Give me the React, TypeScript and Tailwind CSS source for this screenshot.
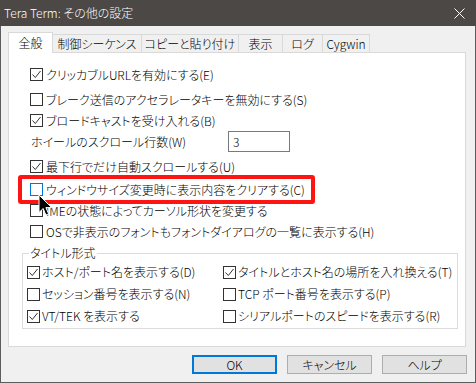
import React from "react";

const Check = ({ checked, hover }: { checked?: boolean; hover?: boolean }) => (
  <span
    className={`flex h-[13px] w-[13px] shrink-0 items-center justify-center border bg-white ${
      hover ? "border-[#0078d7]" : "border-[#333333]"
    }`}
  >
    {checked && (
      <svg width="11" height="11" viewBox="0 0 11 11" fill="none">
        <path d="M1.5 5.5l2.8 3 5.2-6.5" stroke="#333333" strokeWidth="1" />
      </svg>
    )}
  </span>
);

const Row = ({
  label,
  checked,
  hover,
  className = "",
}: {
  label: string;
  checked?: boolean;
  hover?: boolean;
  className?: string;
}) => (
  <div className={`flex h-[21px] items-center gap-[3px] pl-[21px] ${className}`}>
    <Check checked={checked} hover={hover} />
    <span className="whitespace-nowrap">{label}</span>
  </div>
);

const GroupItem = ({ label, checked }: { label: string; checked?: boolean }) => (
  <div className="flex h-[22px] items-center gap-[2px]">
    <Check checked={checked} />
    <span className="whitespace-nowrap">{label}</span>
  </div>
);

const tabs = [
  { name: "全般", w: "w-[45px]" },
  { name: "制御シーケンス", w: "w-[89px]" },
  { name: "コピーと貼り付け", w: "w-[97px]" },
  { name: "表示", w: "w-[44px]" },
  { name: "ログ", w: "w-[40px]" },
  { name: "Cygwin", w: "w-[47px]" },
];

export default function App() {
  return (
    <div className="flex h-[383px] w-[476px] flex-col overflow-hidden bg-[#f0f0f0] font-['Noto_Sans_CJK_JP','Noto_Sans',sans-serif] text-[12px] font-light leading-none text-black [font-feature-settings:'palt']">
      <div className="flex h-[26px] shrink-0 items-center justify-between bg-[#4b4846] pl-[4px] pr-[11px] text-white">
        <span>Tera Term: その他の設定</span>
        <svg width="11" height="11" viewBox="0 0 11 11" fill="none">
          <path d="M0.5 0.5l10 10M10.5 0.5l-10 10" stroke="#ffffff" strokeWidth="1" />
        </svg>
      </div>

      <div className="flex flex-1 flex-col border-x border-b border-[#5c5c5c] pl-[7px] pt-[6px]">
        <div className="flex h-[20px] items-end">
          {tabs.map((t, i) =>
            i === 0 ? (
              <div
                key={t.name}
                className={`relative z-10 -mb-px flex h-[21px] items-center justify-center border border-b-0 border-[#d9d9d9] bg-white ${t.w}`}
              >
                {t.name}
              </div>
            ) : (
              <div
                key={t.name}
                className={`flex h-[18px] items-center justify-center border-r border-t border-[#d9d9d9] bg-[#f0f0f0] ${t.w}`}
              >
                {t.name}
              </div>
            )
          )}
        </div>

        <div className="relative flex h-[295px] w-[458px] flex-col border border-[#d9d9d9] bg-white pt-[11px]">
          <Row label="クリッカブルURLを有効にする(E)" checked />
          <Row label="ブレーク送信のアクセラレータキーを無効にする(S)" className="mt-[4px]" />
          <Row label="ブロードキャストを受け入れる(B)" checked />
          <div className="flex h-[21px] items-center pl-[22px]">
            <span className="w-[197px] whitespace-nowrap">ホイールのスクロール行数(W)</span>
            <div className="flex h-[21px] w-[62px] items-center border border-[#7a7a7a] bg-white pl-[4px]">3</div>
          </div>
          <Row label="最下行でだけ自動スクロールする(U)" checked className="mt-[4px]" />
          <Row label="ウィンドウサイズ変更時に表示内容をクリアする(C)" hover className="mt-[2px]" />
          <Row label="IMEの状態によってカーソル形状を変更する" />
          <Row label="OSで非表示のフォントもフォントダイアログの一覧に表示する(H)" />

          <fieldset className="ml-[13px] mr-[7px] mt-[3px] border border-[#dcdcdc] px-[4px] pb-[1px]">
            <legend className="ml-[2px] px-[1px] leading-[16px]">タイトル形式</legend>
            <div className="grid grid-cols-[196px_1fr]">
              <GroupItem label="ホスト/ポート名を表示する(D)" checked />
              <GroupItem label="タイトルとホスト名の場所を入れ換える(T)" checked />
              <GroupItem label="セッション番号を表示する(N)" />
              <GroupItem label="TCP ポート番号を表示する(P)" />
              <GroupItem label="VT/TEK を表示する" checked />
              <GroupItem label="シリアルポートのスピードを表示する(R)" />
            </div>
          </fieldset>

          <div className="pointer-events-none absolute left-[9px] top-[122px] h-[29px] w-[297px] rounded-[3px] border-4 border-[#ff1414]" />
          <svg
            className="pointer-events-none absolute left-[29px] top-[141px]"
            width="14"
            height="23"
            viewBox="0 0 14 23"
          >
            <path
              d="M1 1v17.5l4.2-4 2.7 6.6 2.7-1.2-2.7-6.3h5.8z"
              fill="#000000"
              stroke="#ffffff"
              strokeWidth="1"
              strokeLinejoin="round"
            />
          </svg>
        </div>

        <div className="mt-[8px] flex justify-end gap-[10px] pr-[8px]">
          <button className="flex h-[19px] w-[85px] items-center justify-center border-2 border-[#0078d7] bg-[#e1e1e1]">
            OK
          </button>
          <button className="flex h-[19px] w-[85px] items-center justify-center border border-[#adadad] bg-[#e1e1e1]">
            キャンセル
          </button>
          <button className="flex h-[19px] w-[85px] items-center justify-center border border-[#adadad] bg-[#e1e1e1]">
            ヘルプ
          </button>
        </div>
      </div>
    </div>
  );
}
